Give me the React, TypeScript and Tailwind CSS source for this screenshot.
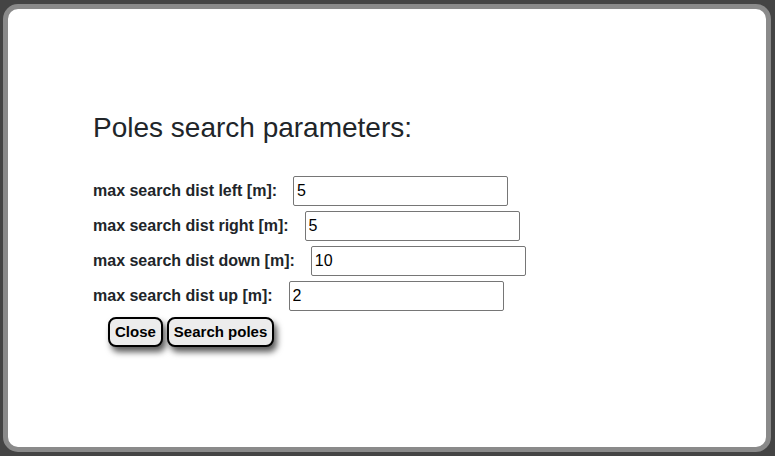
import React from "react"

type Param = { label: string; value: string }

const params: Param[] = [
  { label: "max search dist left [m]:", value: "5" },
  { label: "max search dist right [m]:", value: "5" },
  { label: "max search dist down [m]:", value: "10" },
  { label: "max search dist up [m]:", value: "2" },
]

const font = { fontFamily: '"Liberation Sans", Arial, sans-serif' }

export default function App() {
  return (
    <div
      className="h-[456px] w-[775px] overflow-hidden bg-[#444444] pb-[4px] pl-[3px] pr-[4px] pt-[4px]"
      style={font}
    >
      {/* Dialog card */}
      <div className="h-full w-full rounded-[15px] border-[5px] border-[#8a8a8a] bg-white pl-[85px] pt-[103px]">
        <h2 className="m-0 text-[28px] font-normal leading-[32px] text-[#212529]">
          Poles search parameters:
        </h2>

        <div className="mt-[32px] flex flex-col gap-[5px]">
          {params.map((p, i) => (
            <div key={i} className="flex h-[30px] items-center">
              <label className="mr-[16px] text-[16px] font-bold text-[#212529]">{p.label}</label>
              <input
                type="text"
                defaultValue={p.value}
                className="h-[30px] w-[215px] rounded-[2px] border border-[#767676] bg-white px-[3px] text-[16px] text-black outline-none"
                style={font}
              />
            </div>
          ))}
        </div>

        {/* Actions */}
        <div className="ml-[15px] mt-[6px] flex gap-[4px]">
          <button className="h-[30px] rounded-[8px] border-2 border-black bg-[#ececec] px-[5px] text-[15px] font-bold text-black shadow-[3px_5px_6px_rgba(0,0,0,0.65)]">
            Close
          </button>
          <button className="h-[30px] rounded-[8px] border-2 border-black bg-[#ececec] px-[5px] text-[15px] font-bold text-black shadow-[3px_5px_6px_rgba(0,0,0,0.65)]">
            Search poles
          </button>
        </div>
      </div>
    </div>
  )
}
